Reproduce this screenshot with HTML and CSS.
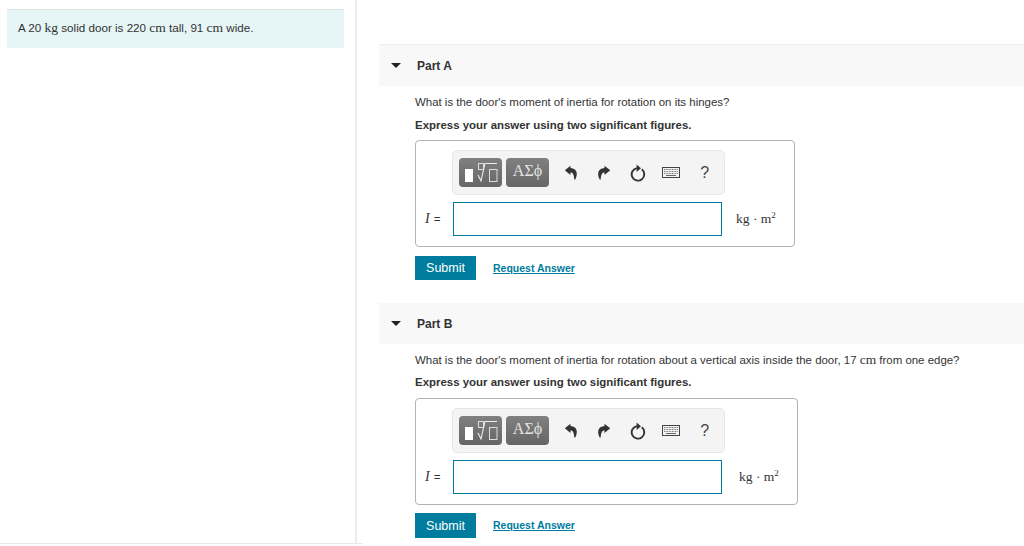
FILE: index.html
```html
<!DOCTYPE html>
<html lang="en">
<head>
<meta charset="utf-8">
<title>Door moment of inertia</title>
<link rel="stylesheet" href="styles.css">
</head>
<body>
<svg class="defs" width="0" height="0" aria-hidden="true">
  <defs>
    <symbol id="undo" viewBox="0 0 14 15"><path d="M6.500 .8 .8 5.200l5.700 4.700V7.500c2.200 0 3.500 1.800 3.800 7h1C14 9.500 13.500 3.400 6.500 3z"/></symbol>
    <symbol id="redo" viewBox="0 0 14 15"><path d="M7.500 .8l5.700 4.400-5.700 4.700V7.500c-2.200 0-3.500 1.800-3.800 7h-1C0 9.500.5 3.400 7.500 3z"/></symbol>
    <symbol id="reset" viewBox="0 0 16 18"><path d="M11.800 5.300A6.300 6.300 0 1 1 7 4.100" fill="none" stroke="#333" stroke-width="1.900"/><path d="M6.600 .5v7.400L11 4.200z" fill="#333" stroke="none"/></symbol>
    <symbol id="kbd" viewBox="0 0 18 11"><rect x=".5" y=".5" width="17" height="10" fill="#f4f4f4" stroke="#444"/><path d="M2 2.500h14M2 4.500h14M2 6.500h14" stroke="#777" stroke-dasharray="1 .6"/><path d="M4 8.500h10" stroke="#666"/></symbol>
    <symbol id="templates" viewBox="0 0 43 29"><rect x="6" y="11" width="8" height="13" fill="#fff"/><rect x="19.500" y="5.500" width="5" height="6" fill="none" stroke="#ddd"/><path d="M19 17l3 6 4-17.500h12" fill="none" stroke="#eee" stroke-width="1.100"/><rect x="30.500" y="11.500" width="7.500" height="12" fill="none" stroke="#ddd"/></symbol>
  </defs>
</svg>
<div class="page">
  <aside class="intro-col">
    <p class="intro">A 20 <span class="math">kg</span> solid door is 220 <span class="math">cm</span> tall, 91 <span class="math">cm</span> wide.</p>
  </aside>
  <main class="parts">
    <section class="part">
      <header class="part-head"><span class="caret"></span><h2>Part A</h2></header>
      <div class="part-body">
        <p class="question">What is the door's moment of inertia for rotation on its hinges?</p>
        <p class="instruction">Express your answer using two significant figures.</p>
        <div class="answer">
          <div class="toolbar">
            <span class="tool-btn tool-wide"><svg width="43" height="29"><use href="#templates"/></svg></span>
            <span class="tool-btn tool-greek">ΑΣϕ</span>
            <span class="tool-icon first"><svg width="14" height="15"><use href="#undo"/></svg></span>
            <span class="tool-icon"><svg width="14" height="15"><use href="#redo"/></svg></span>
            <span class="tool-icon"><svg width="16" height="18"><use href="#reset"/></svg></span>
            <span class="tool-icon"><svg width="18" height="11"><use href="#kbd"/></svg></span>
            <span class="tool-icon help">?</span>
          </div>
          <div class="answer-row">
            <span class="label"><i>I</i> =</span>
            <input class="field" type="text" aria-label="I">
            <span class="unit">kg · m<sup>2</sup></span>
          </div>
        </div>
        <div class="actions"><button class="submit">Submit</button><a class="link" href="#">Request Answer</a></div>
      </div>
    </section>
    <section class="part part-b">
      <header class="part-head"><span class="caret"></span><h2>Part B</h2></header>
      <div class="part-body">
        <p class="question">What is the door's moment of inertia for rotation about a vertical axis inside the door, 17 <span class="math">cm</span> from one edge?</p>
        <p class="instruction">Express your answer using two significant figures.</p>
        <div class="answer answer-b">
          <div class="toolbar">
            <span class="tool-btn tool-wide"><svg width="43" height="29"><use href="#templates"/></svg></span>
            <span class="tool-btn tool-greek">ΑΣϕ</span>
            <span class="tool-icon first"><svg width="14" height="15"><use href="#undo"/></svg></span>
            <span class="tool-icon"><svg width="14" height="15"><use href="#redo"/></svg></span>
            <span class="tool-icon"><svg width="16" height="18"><use href="#reset"/></svg></span>
            <span class="tool-icon"><svg width="18" height="11"><use href="#kbd"/></svg></span>
            <span class="tool-icon help">?</span>
          </div>
          <div class="answer-row">
            <span class="label"><i>I</i> =</span>
            <input class="field" type="text" aria-label="I">
            <span class="unit">kg · m<sup>2</sup></span>
          </div>
        </div>
        <div class="actions"><button class="submit">Submit</button><a class="link" href="#">Request Answer</a></div>
      </div>
    </section>
  </main>
</div>
</body>
</html>
```
FILE: styles.css
```css
* { box-sizing: border-box; }
html, body { margin: 0; height: 546px; overflow: hidden; background: #fff; }
body { font-family: "Liberation Sans", Arial, sans-serif; color: #333; font-size: 11.450px; position: relative; }
.defs { position: absolute; }
.page { display: flex; height: 546px; }
.intro-col { width: 357px; flex: none; height: 544px; padding: 9px 11px 0 7px; border-right: 2px solid #e9edf4; }
.page::after { content: ""; position: absolute; left: 0; top: 543px; width: 363px; height: 1px; background: #e8e8e8; }
.intro { margin: 0; height: 39px; padding: 0 11px; line-height: 36px; background: #e6f5f6; border-top: 1px solid #dde3e3; font-size: 11.650px; color: #333; }
.math { font-family: "Liberation Serif", serif; font-size: 13.500px; line-height: 0; }
.parts { flex: 1; padding: 44px 0 0 22px; min-width: 0; }
.part-b { margin-top: 23px; }
.part-head { display: flex; align-items: center; height: 42px; background: #f8f8f8; border-top: 1px solid #eee; padding-left: 12px; }
.part-b .part-head { border-top: 0; height: 41px; }
.caret { width: 0; height: 0; border-left: 5px solid transparent; border-right: 5px solid transparent; border-top: 5px solid #222; }
h2 { margin: 0 0 0 16px; font-size: 12px; font-weight: bold; color: #333; }
.part-body { padding: 9px 0 0 36px; }
.question { margin: 0; line-height: 14px; color: #333; }
.instruction { margin: 9px 0 0; line-height: 14px; font-weight: bold; color: #333; }
.part-b .instruction { margin-top: 8px; }
.answer { width: 380px; height: 107px; margin-top: 8px; padding: 9px 0 0 36px; border: 1px solid #b3b3b3; border-radius: 4px; }
.answer-b { width: 383px; margin-top: 9px; }
.toolbar { display: flex; align-items: center; width: 273px; height: 45px; padding-left: 6px; background: #f4f4f4; border: 1px solid #e6e6e6; border-radius: 5px; }
.tool-btn { display: flex; align-items: center; justify-content: center; height: 29px; border-radius: 4px; background: linear-gradient(#808080, #666); color: #e4e4e4; }
.tool-wide { width: 43px; }
.tool-greek { width: 43px; margin-left: 4px; padding-bottom: 3px; font-family: "Liberation Serif", serif; font-size: 16px; }
.tool-icon { display: flex; align-items: center; justify-content: center; width: 33.500px; fill: #333; }
.tool-icon.first { margin-left: 5px; }
.help { font-size: 16px; color: #444; }
.answer-row { display: flex; align-items: center; height: 34px; margin: 7px 0 0 -27px; }
.label { width: 28px; font-size: 11.500px; white-space: nowrap; }
.label i { font-family: "Liberation Serif", serif; font-size: 14px; margin-right: 1px; }
.field { width: 269px; height: 34px; border: 1px solid #007c9e; background: #fff; padding: 0; margin: 0; outline: none; }
.unit { margin-left: 14px; font-family: "Liberation Serif", serif; font-size: 13.500px; white-space: nowrap; }
.answer-b .unit { margin-left: 17px; }
.unit sup { font-size: 9px; line-height: 0; }
.actions { display: flex; align-items: center; margin-top: 9px; }
.part-b .actions { margin-top: 8px; }
.submit { width: 61px; height: 24px; padding: 0; border: 0; background: #007c9e; color: #fff; font: 12.500px "Liberation Sans", Arial, sans-serif; }
.part-b .submit { height: 25px; }
.link { margin-left: 17px; padding-bottom: 1px; font-size: 10.500px; font-weight: bold; color: #007c9e; text-decoration: underline; }
```
